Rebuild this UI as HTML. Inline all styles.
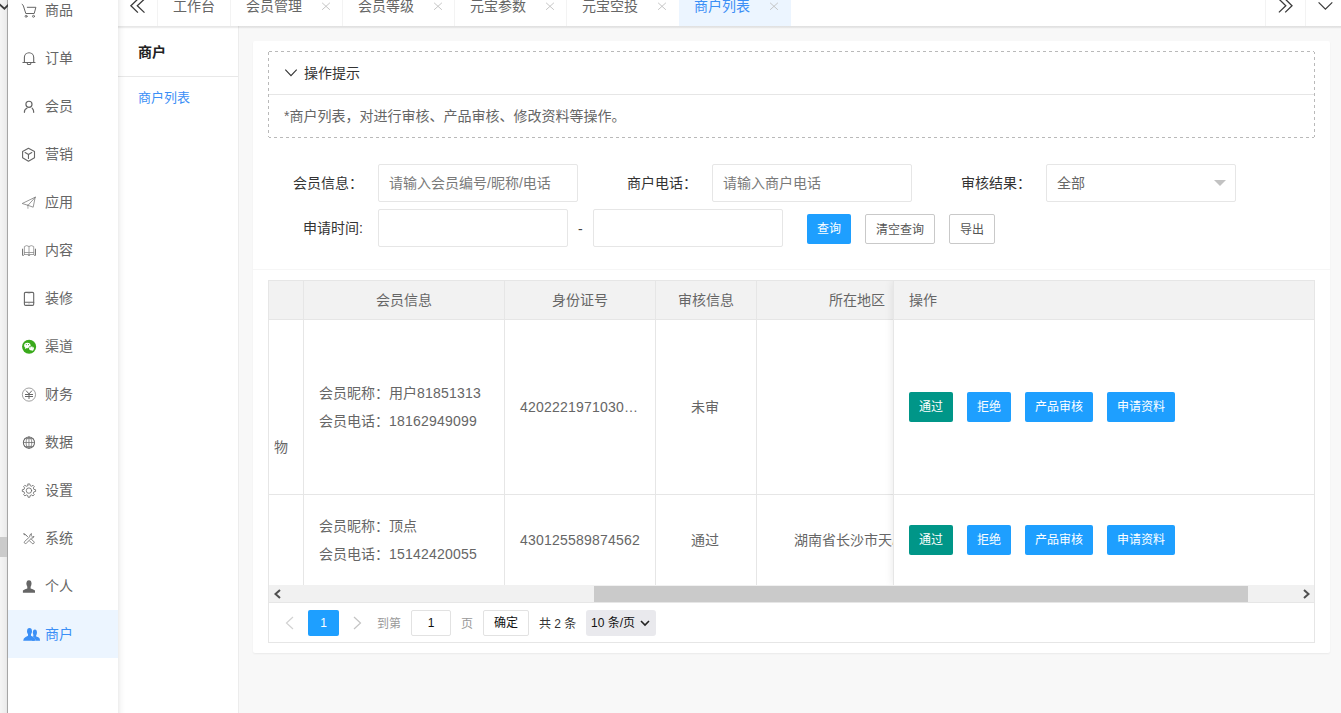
<!DOCTYPE html>
<html lang="zh-CN">
<head>
<meta charset="utf-8">
<title>商户列表</title>
<style>
*{box-sizing:border-box;margin:0;padding:0}
html,body{width:1341px;height:713px;overflow:hidden}
body{position:relative;background:#f8f8f8;font-family:"Liberation Sans","Noto Sans CJK SC",sans-serif;font-size:14px;color:#666;line-height:1}
.abs{position:absolute}
/* left scroll strip */
#lstrip{left:0;top:0;width:8px;height:713px;background:linear-gradient(90deg,#f5f5f5 0,#ececec 6px,#e4e4e4 7px);border-right:1px solid #a6a6a6}
#lthumb{left:0;top:537px;width:7px;height:20px;background:#cbcbcb}
#larrow{left:0;top:0;width:8px;height:14px;overflow:hidden}
/* side nav */
#side{left:8px;top:0;width:110px;height:713px;background:#fff;z-index:5}
#sideshadow{left:118px;top:0;width:7px;height:713px;background:linear-gradient(90deg,rgba(0,0,0,.07),rgba(0,0,0,.025) 45%,rgba(0,0,0,0));z-index:6}
.nav{position:absolute;left:0;width:110px;height:48px}
.nav span{position:absolute;left:37px;top:17px;font-size:14px;line-height:14px;color:#666;white-space:nowrap}
.nav svg{position:absolute;left:13px;top:16px;width:16px;height:16px;overflow:visible}
.nav.on{background:#ecf5ff}
.nav.on span{color:#3b8ff6}
/* tab bar */
#tabs{left:118px;top:0;width:1223px;height:26px;background:#fff;z-index:4}
#tabshadow{left:118px;top:26px;width:1223px;height:3px;background:linear-gradient(180deg,rgba(0,0,0,.10),rgba(0,0,0,.07) 50%,rgba(0,0,0,.02) 80%,rgba(0,0,0,0));z-index:4}
.tab{position:absolute;top:0;height:26px;border-left:1px solid #f3f3f3;font-size:14px;color:#666;white-space:nowrap}
.tab b{position:absolute;top:-1px;left:0;font-weight:normal;line-height:14px}
.tab i{position:absolute;top:0;font-style:normal;color:#c2c2c2;font-size:14px;line-height:14px}
.tab.on{background:#ecf5ff;color:#3b8ff6}
/* sub side */
#sub{left:118px;top:26px;width:121px;height:687px;background:#fff;border-right:1px solid #ececec;z-index:3}
#sub h3{position:absolute;left:20px;top:19px;font-size:14px;line-height:14px;font-weight:bold;color:#222}
#sub .ln{position:absolute;left:0;top:50px;width:120px;height:1px;background:#e8e8e8}
#sub a{position:absolute;left:20px;top:65px;font-size:13px;line-height:14px;color:#3b8ff6}
/* card */
#card{left:253px;top:41px;width:1077px;height:612px;background:#fff;border-radius:2px;box-shadow:0 1px 2px 0 rgba(0,0,0,.06)}
#cardln{left:253px;top:269px;width:1077px;height:1px;background:#f6f6f6}
#tips{left:268px;top:51px;width:1047px;height:87px}
#tipsln{left:269px;top:94px;width:1045px;height:1px;background:#e6e6e6}
.t14{font-size:14px;line-height:14px;white-space:nowrap}
.lbl{font-size:14px;line-height:14px;color:#333;white-space:nowrap;text-align:right;width:95px}
.inp{height:38px;border:1px solid #e6e6e6;border-radius:2px;background:#fff;font-size:14px;color:#7a7a7a;line-height:36px;padding-left:10px;white-space:nowrap;overflow:hidden}
.btn{height:30px;line-height:30px;font-size:12px;border-radius:2px;text-align:center;white-space:nowrap;color:#fff;background:#1e9fff}
.btn.pri{background:#fff;border:1px solid #c9c9c9;color:#555;line-height:30px}
.btn.grn{background:#009688}
/* table */
#tbl{left:268px;top:280px;width:1047px;height:363px;border:1px solid #e6e6e6;background:#fff;overflow:hidden}
.hd{background:#f2f2f2}
.vl{position:absolute;width:1px;background:#e6e6e6}
.hl{position:absolute;height:1px;background:#e6e6e6}
.n{letter-spacing:.21px}
.c{position:absolute;font-size:14px;line-height:14px;color:#666;white-space:nowrap}
</style>
</head>
<body>
<div id="lstrip" class="abs"></div>
<div id="lthumb" class="abs"></div>
<svg class="abs" style="left:0;top:0" width="8" height="14" viewBox="0 0 8 14"><path d="M-1 4 L4.4 8.6 L8.6 4.6" fill="none" stroke="#3c3c3c" stroke-width="1.9"/></svg>

<div id="sideshadow" class="abs"></div>
<div id="tabshadow" class="abs"></div>
<div id="side" class="abs">
  <div class="nav" style="top:-14px"><svg viewBox="0 0 16 16"><path d="M1.1 2.4 L2.2 3.3 L4.8 11.5 L13.2 11.5 L14.9 5.3 L6.3 5.3" fill="none" stroke="#666" stroke-width="1" stroke-linecap="round" stroke-linejoin="round"/><circle cx="5.1" cy="14.3" r="1" fill="none" stroke="#666" stroke-width=".9" stroke-linecap="round" stroke-linejoin="round"/><circle cx="12.5" cy="14.3" r="1" fill="none" stroke="#666" stroke-width=".9" stroke-linecap="round" stroke-linejoin="round"/></svg><span>商品</span></div>
  <div class="nav" style="top:34px"><svg viewBox="0 0 16 16"><path d="M1.9 12.5 H14 M3.4 12.5 V7.3 A4.65 4.6 0 0 1 12.7 7.3 V12.5 M6.3 12.5 V13.4 Q6.3 14.5 7.4 14.5 H8.7 Q9.8 14.5 9.8 13.4 V12.5" fill="none" stroke="#666" stroke-width="1.1" stroke-linecap="round" stroke-linejoin="round"/></svg><span>订单</span></div>
  <div class="nav" style="top:82px"><svg viewBox="0 0 16 16"><circle cx="7.96" cy="6.3" r="3.05" fill="none" stroke="#666" stroke-width="1.2" stroke-linecap="round" stroke-linejoin="round"/><path d="M3.4 14.3 Q3.3 11.2 5.9 10.2 M11.2 10.2 Q12.8 11.6 12.7 14.3" fill="none" stroke="#666" stroke-width="1.2" stroke-linecap="round" stroke-linejoin="round"/></svg><span>会员</span></div>
  <div class="nav" style="top:130px"><svg viewBox="0 0 16 16"><path d="M7.46 2.2 L13.5 5.4 V11.8 L7.46 15.2 L1.6 11.8 V5.4 Z M4.1 6.6 L7.46 8.5 L10.8 6.6 M7.46 8.5 V12.5" fill="none" stroke="#666" stroke-width="1.1" stroke-linecap="round" stroke-linejoin="round"/></svg><span>营销</span></div>
  <div class="nav" style="top:178px"><svg viewBox="0 0 16 16"><path d="M6.1 11 L6.1 14.7 L7.7 14.7 L7.7 11.4Z" fill="#c9c9c9"/><path d="M14.2 3.2 L1.2 9.5 L6.6 11.2 Z M6.6 11.2 L12.2 13.2 L14.2 3.2" fill="none" stroke-linecap="round" stroke-linejoin="round" stroke="#757575" stroke-width=".75"/></svg><span>应用</span></div>
  <div class="nav" style="top:226px"><svg viewBox="0 0 16 16"><path d="M1.6 7.1 V13.4 H2.3 M14.4 7.1 V13.4 H13.7" fill="none" stroke-linecap="round" stroke-linejoin="round" stroke="#6a6a6a" stroke-width="1"/><path d="M3.4 12.5 V4.5 Q5.7 2.7 8 4.5 Q10.3 2.7 12.7 4.5 V12.5 M8 4.5 V13.2 M3.4 10.5 H12.7 M3.4 12.5 H12.7" fill="none" stroke-linecap="round" stroke-linejoin="round" stroke="#8c8c8c" stroke-width=".8"/><path d="M7.3 13.5 H8.7" fill="none" stroke-linecap="round" stroke-linejoin="round" stroke="#8c8c8c" stroke-width=".8"/></svg><span>内容</span></div>
  <div class="nav" style="top:274px"><svg viewBox="0 0 16 16"><rect x="3.4" y="2.4" width="9.3" height="13" rx="1.2" fill="none" stroke="#666" stroke-width="1.1" stroke-linecap="round" stroke-linejoin="round"/><path d="M3.4 12.3 H12.7" fill="none" stroke="#666" stroke-width="1.1" stroke-linecap="round" stroke-linejoin="round"/><path d="M7 3.3 H9 M7.4 13.9 H8.6" fill="none" stroke="#aaa" stroke-width=".6" stroke-linecap="round" stroke-linejoin="round"/></svg><span>装修</span></div>
  <div class="nav" style="top:322px"><svg viewBox="0 0 16 16"><circle cx="8.1" cy="8.8" r="7.05" fill="#3aaa1c"/><ellipse cx="6.4" cy="7.5" rx="3.2" ry="2.7" fill="#fff"/><path d="M4.2 9.2 L3.9 10.9 L5.8 10Z" fill="#fff"/><ellipse cx="10.4" cy="10.3" rx="2.9" ry="2.4" fill="#3aaa1c"/><ellipse cx="10.5" cy="10.4" rx="2.5" ry="2" fill="#fff"/><path d="M11.8 11.8 L12.4 12.9 L10.8 12.3Z" fill="#fff"/><circle cx="5.3" cy="6.6" r=".55" fill="#3aaa1c"/><circle cx="7.5" cy="6.6" r=".55" fill="#3aaa1c"/><circle cx="9.7" cy="9.8" r=".35" fill="#3aaa1c"/><circle cx="11.3" cy="9.8" r=".35" fill="#3aaa1c"/></svg><span>渠道</span></div>
  <div class="nav" style="top:370px"><svg viewBox="0 0 16 16"><circle cx="7.96" cy="8.6" r="6.6" fill="none" stroke="#777" stroke-width=".7"/><path d="M5.3 4.9 L8 7.9 L10.7 4.9 M4.4 8.5 H11.6 M4.4 10.5 H11.6 M8 7.9 V12.6" fill="none" stroke="#666" stroke-width="1" stroke-linecap="round" stroke-linejoin="round"/></svg><span>财务</span></div>
  <div class="nav" style="top:418px"><svg viewBox="0 0 16 16"><circle cx="7.96" cy="8.6" r="5.6" fill="none" stroke-linecap="round" stroke-linejoin="round" stroke="#686868" stroke-width="1.05"/><ellipse cx="7.96" cy="8.6" rx="2.85" ry="5.6" fill="none" stroke-linecap="round" stroke-linejoin="round" stroke="#727272" stroke-width=".8"/><path d="M7.96 3 V14.2 M2.4 8.5 H13.5 M3.8 4.6 H12.1 M3.8 12.5 H12.1" fill="none" stroke-linecap="round" stroke-linejoin="round" stroke="#727272" stroke-width=".8"/></svg><span>数据</span></div>
  <div class="nav" style="top:466px"><svg viewBox="0 0 16 16"><path d="M7.07 1.96 L8.85 1.96 L9.15 3.64 L10.62 4.25 L12.02 3.27 L13.29 4.54 L12.31 5.94 L12.92 7.41 L14.60 7.71 L14.60 9.49 L12.92 9.79 L12.31 11.26 L13.29 12.66 L12.02 13.93 L10.62 12.95 L9.15 13.56 L8.85 15.24 L7.07 15.24 L6.77 13.56 L5.30 12.95 L3.90 13.93 L2.63 12.66 L3.61 11.26 L3.00 9.79 L1.32 9.49 L1.32 7.71 L3.00 7.41 L3.61 5.94 L2.63 4.54 L3.90 3.27 L5.30 4.25 L6.77 3.64Z" fill="none" stroke="#6c6c6c" stroke-width=".85" stroke-linecap="round" stroke-linejoin="round"/><circle cx="7.96" cy="8.6" r="2.7" fill="none" stroke="#6c6c6c" stroke-width=".85" stroke-linecap="round" stroke-linejoin="round"/></svg><span>设置</span></div>
  <div class="nav" style="top:514px"><svg viewBox="0 0 16 16"><path d="M3.0 3.9 L3.9 4.2 L6.5 6.5 M3.0 3.9 L3.4 4.8" fill="none" stroke="#707070" stroke-width="1" stroke-linecap="round" stroke-linejoin="round"/><path d="M10.3 9.1 L13.1 11.9 Q13.5 12.9 12.7 13.5 Q11.9 14 11.2 13.5 L8.7 11" fill="none" stroke="#707070" stroke-width=".85" stroke-linecap="round" stroke-linejoin="round"/><path d="M10.1 3.7 Q8.3 4.6 8.8 6.7 L3.6 11.5 Q2.9 12.5 3.6 13.2 Q4.4 13.9 5.3 13.2 L10.5 8.2 Q12.5 8.4 13 6.4 L11.6 6.9 L10.5 5.9 Z" fill="none" stroke="#707070" stroke-width=".85" stroke-linecap="round" stroke-linejoin="round"/></svg><span>系统</span></div>
  <div class="nav" style="top:562px"><svg viewBox="0 0 16 16"><ellipse cx="7.96" cy="5.6" rx="2.55" ry="3.45" fill="#666"/><path d="M6.3 8 H9.6 V10.6 L11.8 11.2 L14 12.4 V14.7 H1.9 V12.4 L4.1 11.2 L6.3 10.6 Z" fill="#666"/></svg><span>个人</span></div>
  <div class="nav on" style="top:610px"><svg viewBox="0 0 16 16"><ellipse cx="13.9" cy="6.4" rx="2.05" ry="2.9" fill="#3b8ff6"/><path d="M12.6 8.5 H15.2 V10.4 L17.4 11.3 Q19.1 12.1 19.1 14.7 H11 Z" fill="#3b8ff6"/><path d="M9.5 8.2 L11.6 11 Q13.6 12.2 14.3 14.9" fill="none" stroke="#ecf5ff" stroke-width="1.1"/><ellipse cx="8.5" cy="5.3" rx="2.45" ry="3.2" fill="#3b8ff6"/><path d="M7 7.8 H10 V9.8 L12 10.8 Q14.3 11.8 14.7 14.7 H2.2 Q2.3 12 4.6 10.9 L7 9.8 Z" fill="#3b8ff6"/></svg><span>商户</span></div>
</div>

<div id="tabs" class="abs">
  <svg class="abs" style="left:11px;top:0" width="18" height="14" viewBox="0 0 18 14"><path d="M8.9 -1 L1.9 5.8 L8.9 12.6 M15.5 -1 L8.3 5.8 L15.5 12.6" fill="none" stroke="#3a3a3a" stroke-width="1.3"/></svg>
  <div class="abs" style="left:1147px;top:0;width:1px;height:26px;background:#f3f3f3"></div>
  <div class="abs" style="left:1187px;top:0;width:1px;height:26px;background:#f3f3f3"></div>
  <svg class="abs" style="left:1159px;top:0" width="18" height="14" viewBox="0 0 18 14"><path d="M1.9 -1 L8.8 5.8 L1.9 12.4 M8.2 -1 L15 5.8 L8.2 12.4" fill="none" stroke="#3a3a3a" stroke-width="1.3"/></svg>
  <svg class="abs" style="left:1199px;top:0" width="18" height="14" viewBox="0 0 18 14"><path d="M1.6 2.4 L8.4 9.2 L15.3 2.4" fill="none" stroke="#3a3a3a" stroke-width="1.2"/></svg>
  <div class="tab" style="left:39px;width:73px"><b style="left:15px">工作台</b></div>
  <div class="tab" style="left:112px;width:112px"><b style="left:15px">会员管理</b><svg class="abs" style="left:90px;top:2px" width="10" height="9" viewBox="0 0 10 9"><path d="M1.1 0.8 L8.9 7.8 M8.9 0.8 L1.1 7.8" fill="none" stroke="#bfbfbf" stroke-width=".9"/></svg></div>
  <div class="tab" style="left:224px;width:112px"><b style="left:15px">会员等级</b><svg class="abs" style="left:90px;top:2px" width="10" height="9" viewBox="0 0 10 9"><path d="M1.1 0.8 L8.9 7.8 M8.9 0.8 L1.1 7.8" fill="none" stroke="#bfbfbf" stroke-width=".9"/></svg></div>
  <div class="tab" style="left:336px;width:112px"><b style="left:15px">元宝参数</b><svg class="abs" style="left:90px;top:2px" width="10" height="9" viewBox="0 0 10 9"><path d="M1.1 0.8 L8.9 7.8 M8.9 0.8 L1.1 7.8" fill="none" stroke="#bfbfbf" stroke-width=".9"/></svg></div>
  <div class="tab" style="left:448px;width:112px"><b style="left:15px">元宝空投</b><svg class="abs" style="left:90px;top:2px" width="10" height="9" viewBox="0 0 10 9"><path d="M1.1 0.8 L8.9 7.8 M8.9 0.8 L1.1 7.8" fill="none" stroke="#bfbfbf" stroke-width=".9"/></svg></div>
  <div class="tab on" style="left:561px;width:112px;border-left:none"><b style="left:15px">商户列表</b><svg class="abs" style="left:90px;top:2px" width="10" height="9" viewBox="0 0 10 9"><path d="M1.1 0.8 L8.9 7.8 M8.9 0.8 L1.1 7.8" fill="none" stroke="#bfbfbf" stroke-width=".9"/></svg></div>
</div>

<div id="sub" class="abs">
  <h3>商户</h3>
  <div class="ln"></div>
  <a>商户列表</a>
</div>

<div id="card" class="abs"></div>
<div id="cardln" class="abs"></div>
<svg id="tips" class="abs" width="1047" height="87" viewBox="0 0 1047 87"><g fill="none" stroke="#b9b9b9" stroke-width="1" stroke-dasharray="3 3"><path d="M1 .5 H1046"/><path d="M1 86.5 H1046" stroke-dashoffset="1"/><path d="M.5 1 V86"/><path d="M1046.5 1 V86" stroke-dashoffset="1"/></g></svg>
<div id="tipsln" class="abs"></div>
<svg class="abs" style="left:284px;top:68px" width="14" height="10" viewBox="0 0 14 10"><path d="M1.3 1.6 L7 7.6 L12.7 1.6" fill="none" stroke="#333" stroke-width="1.1"/></svg>
<div class="abs t14" style="left:304px;top:66px;color:#333">操作提示</div>
<div class="abs" style="left:284px;top:109px;font-size:14px;line-height:14px;color:#666;white-space:nowrap">*商户列表，对进行审核、产品审核、修改资料等操作。</div>

<!-- form -->
<div class="abs lbl" style="left:268px;top:176px">会员信息：</div>
<div class="abs inp" style="left:378px;top:164px;width:200px">请输入会员编号/昵称/电话</div>
<div class="abs lbl" style="left:602px;top:176px">商户电话：</div>
<div class="abs inp" style="left:712px;top:164px;width:200px">请输入商户电话</div>
<div class="abs lbl" style="left:936px;top:176px">审核结果：</div>
<div class="abs inp" style="left:1046px;top:164px;width:190px;color:#666">全部</div>
<div class="abs" style="left:1214px;top:180px;width:0;height:0;border:6px solid transparent;border-top-color:#c2c2c2"></div>

<div class="abs lbl" style="left:268px;top:221px">申请时间:</div>
<div class="abs inp" style="left:378px;top:209px;width:190px"></div>
<div class="abs t14" style="left:578px;top:222px;color:#444">-</div>
<div class="abs inp" style="left:593px;top:209px;width:190px"></div>
<div class="abs btn" style="left:807px;top:214px;width:44px">查询</div>
<div class="abs btn pri" style="left:865px;top:214px;width:70px">清空查询</div>
<div class="abs btn pri" style="left:949px;top:214px;width:46px">导出</div>

<!-- table -->
<div id="tbl" class="abs">
  <div class="abs hd" style="left:0;top:0;width:1045px;height:38px"></div>
  <div class="hl" style="left:0;top:38px;width:1045px"></div>
  <div class="hl" style="left:0;top:213px;width:1045px"></div>
  <div class="vl" style="left:34px;top:0;height:304px"></div>
  <div class="vl" style="left:235px;top:0;height:304px"></div>
  <div class="vl" style="left:386px;top:0;height:304px"></div>
  <div class="vl" style="left:487px;top:0;height:304px"></div>
  <div class="c" style="left:107px;top:12px">会员信息</div>
  <div class="c" style="left:283px;top:12px">身份证号</div>
  <div class="c" style="left:409px;top:12px">审核信息</div>
  <div class="c" style="left:560px;top:12px">所在地区</div>
  <!-- row 1 -->
  <div class="c" style="left:5px;top:159px">物</div>
  <div class="c" style="left:50px;top:105px">会员昵称：用户<span class="n">81851313</span></div>
  <div class="c" style="left:50px;top:133px">会员电话：<span class="n">18162949099</span></div>
  <div class="c" style="left:251px;top:119px"><span class="n">4202221971030</span>…</div>
  <div class="c" style="left:422px;top:119px">未审</div>
  <!-- row 2 -->
  <div class="c" style="left:50px;top:238px">会员昵称：顶点</div>
  <div class="c" style="left:50px;top:266px">会员电话：<span class="n">15142420055</span></div>
  <div class="c" style="left:251px;top:252px"><span class="n">430125589874562</span></div>
  <div class="c" style="left:422px;top:252px">通过</div>
  <div class="c" style="left:525px;top:252px">湖南省长沙市天心区</div>
  <!-- fixed right col -->
  <div class="abs" id="fix" style="left:624px;top:0;width:421px;height:304px;background:#fff;border-left:1px solid #e6e6e6;box-shadow:-1px 0 8px rgba(0,0,0,.08)">
    <div class="abs hd" style="left:0;top:0;width:420px;height:38px"></div>
    <div class="hl" style="left:0;top:38px;width:420px"></div>
    <div class="hl" style="left:0;top:213px;width:420px"></div>
    <div class="c" style="left:15px;top:12px">操作</div>
    <div class="abs btn grn" style="left:15px;top:111px;width:44px">通过</div>
    <div class="abs btn" style="left:73px;top:111px;width:44px">拒绝</div>
    <div class="abs btn" style="left:131px;top:111px;width:68px">产品审核</div>
    <div class="abs btn" style="left:213px;top:111px;width:68px">申请资料</div>
    <div class="abs btn grn" style="left:15px;top:244px;width:44px">通过</div>
    <div class="abs btn" style="left:73px;top:244px;width:44px">拒绝</div>
    <div class="abs btn" style="left:131px;top:244px;width:68px">产品审核</div>
    <div class="abs btn" style="left:213px;top:244px;width:68px">申请资料</div>
  </div>
  <!-- h scrollbar -->
  <div class="abs" style="left:0;top:304px;width:1045px;height:17px;background:#f1f1f1"></div>
  <div class="abs" style="left:325px;top:305px;width:654px;height:16px;background:#cacaca"></div>
  <svg class="abs" style="left:4px;top:308px" width="9" height="10" viewBox="0 0 9 10"><path d="M7 1 L2.5 5 L7 9" fill="none" stroke="#505050" stroke-width="2"/></svg>
  <svg class="abs" style="left:1033px;top:308px" width="9" height="10" viewBox="0 0 9 10"><path d="M2 1 L6.5 5 L2 9" fill="none" stroke="#505050" stroke-width="2"/></svg>
  <div class="hl" style="left:0;top:321px;width:1045px"></div>
  <!-- pager -->
  <svg class="abs" style="left:16px;top:335px" width="9" height="14" viewBox="0 0 9 14"><path d="M8 1 L1.5 7 L8 13" fill="none" stroke="#d2d2d2" stroke-width="1.2"/></svg>
  <div class="abs" style="left:39px;top:329px;width:31px;height:26px;background:#1e9fff;border-radius:2px;color:#fff;font-size:12px;line-height:26px;text-align:center">1</div>
  <svg class="abs" style="left:84px;top:335px" width="9" height="14" viewBox="0 0 9 14"><path d="M1 1 L7.5 7 L1 13" fill="none" stroke="#c4c4c4" stroke-width="1.2"/></svg>
  <div class="c" style="left:108px;top:336px;font-size:12px;color:#999">到第</div>
  <div class="abs" style="left:142px;top:329px;width:40px;height:26px;border:1px solid #e2e2e2;border-radius:2px;font-size:12px;line-height:24px;color:#111;text-align:center">1</div>
  <div class="c" style="left:192px;top:336px;font-size:12px;color:#999">页</div>
  <div class="abs" style="left:214px;top:329px;width:46px;height:26px;border:1px solid #e2e2e2;border-radius:2px;font-size:12px;line-height:24px;color:#111;text-align:center">确定</div>
  <div class="c" style="left:270px;top:336px;font-size:12px;color:#333">共 2 条</div>
  <div class="abs" style="left:317px;top:329px;width:70px;height:26px;background:#e9e9ed;border-radius:3px;font-size:12px;line-height:26px;color:#111;padding-left:5px;white-space:nowrap">10 条/页</div>
  <svg class="abs" style="left:371px;top:339px" width="10" height="7" viewBox="0 0 10 7"><path d="M1 1 L5 5 L9 1" fill="none" stroke="#222" stroke-width="1.6"/></svg>
</div>
</body>
</html>
